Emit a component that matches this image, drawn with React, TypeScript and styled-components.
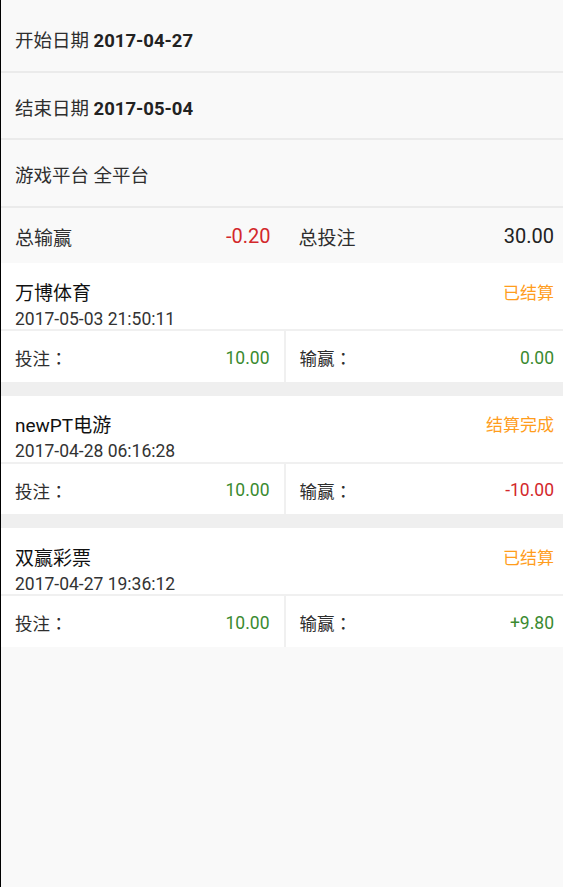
import React from "react";
import styled, { createGlobalStyle } from "styled-components";

const Global = createGlobalStyle`
  html, body {
    margin: 0;
    padding: 0;
    overflow: hidden;
    background: #f9f9f9;
  }
  body {
    font-family: Roboto, "Noto Sans CJK SC", sans-serif;
  }
`;

const Page = styled.div`
  width: 568px;
  min-height: 887px;
  box-sizing: border-box;
  border-left: 1px solid #000;
  background: #f9f9f9;
  font-family: Roboto, "Noto Sans CJK SC", sans-serif;
`;

const Filters = styled.div`
  padding-top: 5px;
  background: #f9f9f9;
`;

const InfoRow = styled.div`
  height: 65.5px;
  box-sizing: content-box;
  display: flex;
  align-items: center;
  padding: 0 14px;
  border-bottom: 2px solid #ebebeb;
  font-size: 18.5px;
  color: #2e2e2e;
  white-space: pre;
  & > * {
    position: relative;
  }
`;

const RowText = styled.span`
  padding-top: 3px;
`;

const Strong = styled.span`
  font-weight: 700;
  color: #222;
`;

const Summary = styled.div`
  height: 55.5px;
  display: grid;
  grid-template-columns: 1fr 1fr;
  background: #f9f9f9;
`;

const Pair = styled.div`
  display: flex;
  align-items: center;
  justify-content: space-between;
  padding: 2px 14px 0;
  color: #2e2e2e;
`;

const Label = styled.span<{ $size: number }>`
  font-size: ${(p) => p.$size}px;
  color: #2e2e2e;
`;

const StatLabel = styled(Label)`
  font-family: Roboto, "Noto Sans CJK TC", sans-serif;
`;

const Value = styled.span<{ $tone: "red" | "green" | "dark"; $size: number }>`
  font-size: ${(p) => p.$size}px;
  color: ${(p) =>
    p.$tone === "red" ? "#d3282b" : p.$tone === "green" ? "#3a8a30" : "#222"};
`;

const List = styled.div`
  background: #efefef;
`;

const Card = styled.div`
  background: #fff;
  margin-bottom: 14px;
`;

const CardHead = styled.div`
  height: 66px;
  box-sizing: border-box;
  padding: 17.5px 14px 0;
  display: flex;
  justify-content: space-between;
`;

const TitleBlock = styled.div`
  display: flex;
  flex-direction: column;
`;

const Title = styled.div`
  font-size: 19px;
  line-height: 25px;
  color: #111;
`;

const Time = styled.div`
  font-size: 17.5px;
  line-height: 27px;
  color: #333;
`;

const Status = styled.div`
  font-size: 17px;
  line-height: 25px;
  color: #ff9d1c;
`;

const Stats = styled.div`
  height: 52.5px;
  box-sizing: border-box;
  border-top: 2px solid #f0f0f0;
  display: grid;
  grid-template-columns: 1fr 1fr;
  column-gap: 2px;
  background: #f0f0f0;
`;

const StatCell = styled(Pair)`
  background: #fff;
  padding-top: 3px;
`;

type Rec = {
  name: string;
  time: string;
  status: string;
  bet: string;
  win: string;
  winTone: "red" | "green";
};

const records: Rec[] = [
  { name: "万博体育", time: "2017-05-03 21:50:11", status: "已结算", bet: "10.00", win: "0.00", winTone: "green" },
  { name: "newPT电游", time: "2017-04-28 06:16:28", status: "结算完成", bet: "10.00", win: "-10.00", winTone: "red" },
  { name: "双赢彩票", time: "2017-04-27 19:36:12", status: "已结算", bet: "10.00", win: "+9.80", winTone: "green" },
];

export default function App() {
  return (
    <>
      <Global />
      <Page>
        <Filters>
          <InfoRow>
            <RowText>
              开始日期 <Strong>2017-04-27</Strong>
            </RowText>
          </InfoRow>
          <InfoRow>
            <RowText>
              结束日期 <Strong>2017-05-04</Strong>
            </RowText>
          </InfoRow>
          <InfoRow>
            <RowText>游戏平台 全平台</RowText>
          </InfoRow>
        </Filters>
        <Summary>
          <Pair>
            <Label $size={19}>总输赢</Label>
            <Value $tone="red" $size={20}>-0.20</Value>
          </Pair>
          <Pair>
            <Label $size={19}>总投注</Label>
            <Value $tone="dark" $size={20}>30.00</Value>
          </Pair>
        </Summary>
        <List>
          {records.map((r) => (
            <Card key={r.name}>
              <CardHead>
                <TitleBlock>
                  <Title>{r.name}</Title>
                  <Time>{r.time}</Time>
                </TitleBlock>
                <Status>{r.status}</Status>
              </CardHead>
              <Stats>
                <StatCell>
                  <StatLabel $size={17.5}>投注：</StatLabel>
                  <Value $tone="green" $size={17.5}>{r.bet}</Value>
                </StatCell>
                <StatCell>
                  <StatLabel $size={17.5}>输赢：</StatLabel>
                  <Value $tone={r.winTone} $size={17.5}>{r.win}</Value>
                </StatCell>
              </Stats>
            </Card>
          ))}
        </List>
      </Page>
    </>
  );
}
